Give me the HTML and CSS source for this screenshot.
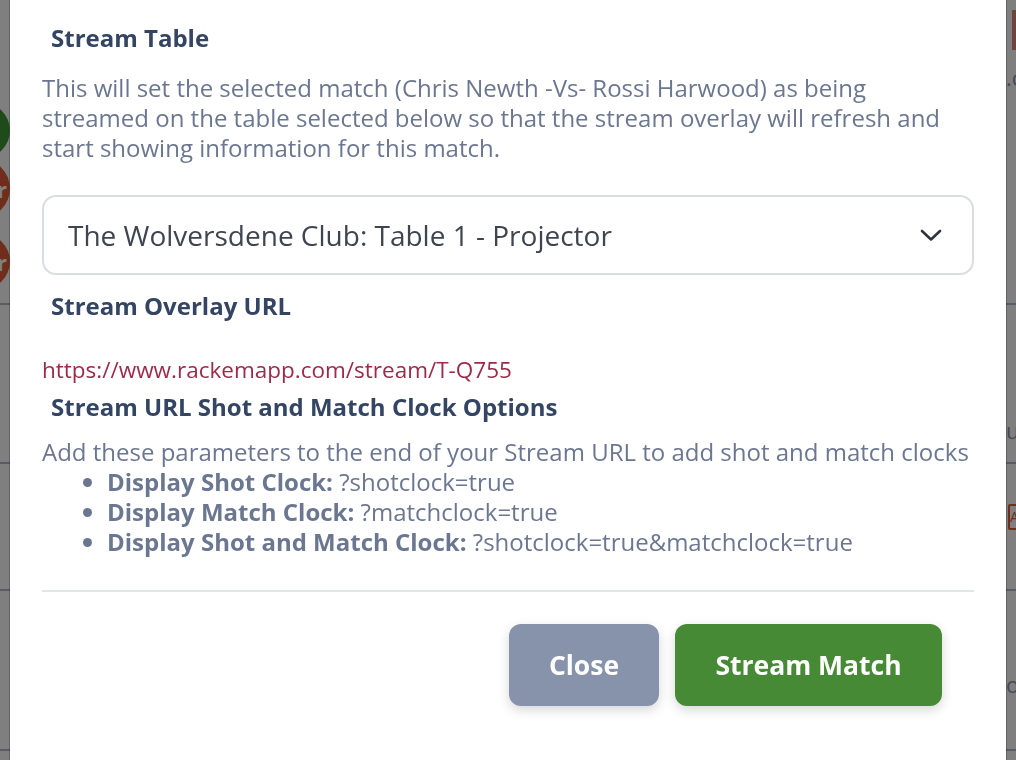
FILE: index.html
```html
<!DOCTYPE html>
<html lang="en">
<head>
<meta charset="utf-8">
<title>Stream Table</title>
<link rel="stylesheet" href="styles.css">
</head>
<body>
<div class="page">
  <div class="row r1">
    <div class="left-col">
      <span class="badge green"></span>
      <span class="badge red tall">r</span>
      <span class="badge red gapped">r</span>
    </div>
    <div class="right-col"><span class="rmark"></span><span class="rtext">.c</span></div>
  </div>
  <div class="row r2"><div class="left-col"></div><div class="right-col"><span class="rtext">u</span></div></div>
  <div class="row r3"><div class="left-col"></div><div class="right-col"><span class="warn">A</span></div></div>
  <div class="row r4"><div class="left-col"></div><div class="right-col"><span class="rtext">o</span></div></div>
</div>
<div class="backdrop"></div>
<div class="modal">
  <h2 class="title">Stream Table</h2>
  <p class="desc">This will set the selected match (Chris Newth -Vs- Rossi Harwood) as being streamed on the table selected below so that the stream overlay will refresh and start showing information for this match.</p>
  <div class="select">
    <span>The Wolversdene Club: Table 1 - Projector</span>
    <svg class="chev" width="22" height="13" viewBox="0 0 22 13"><path d="M2 2 L11 10.5 L20 2" fill="none" stroke="#2f343c" stroke-width="2.6" stroke-linecap="round" stroke-linejoin="round"/></svg>
  </div>
  <h2 class="title t2">Stream Overlay URL</h2>
  <p class="url">https://www.rackemapp.com/stream/T-Q755</p>
  <h2 class="title t3">Stream URL Shot and Match Clock Options</h2>
  <p class="desc hint">Add these parameters to the end of your Stream URL to add shot and match clocks</p>
  <ul class="opts">
    <li><b>Display Shot Clock:</b> ?shotclock=true</li>
    <li><b>Display Match Clock:</b> ?matchclock=true</li>
    <li><b>Display Shot and Match Clock:</b> ?shotclock=true&amp;matchclock=true</li>
  </ul>
  <hr class="sep">
  <div class="actions">
    <button class="btn close">Close</button>
    <button class="btn go">Stream Match</button>
  </div>
</div>
</body>
</html>
```
FILE: styles.css
```css
html, body {
  margin: 0;
  padding: 0;
  height: 760px;
  overflow: hidden;
}
body {
  font-family: "Open Sans", "Liberation Sans", sans-serif;
  background: #ffffff;
}
.page {
  display: flex;
  flex-direction: column;
  width: 1016px;
}
.row {
  display: flex;
  justify-content: space-between;
  border-bottom: 2px solid #aeb6c8;
  box-sizing: border-box;
}
.r1 { height: 305px; }
.r2 { height: 159px; }
.r3 { height: 127px; }
.r4 { height: 160px; }
.left-col {
  display: flex;
  flex-direction: column;
  margin-left: -50px;
  width: 60px;
  padding-top: 103px;
}
.badge {
  display: flex;
  align-items: center;
  justify-content: flex-end;
  height: 55px;
  width: 60px;
  border-radius: 28px;
  color: #ffffff;
  font-size: 22px;
  font-weight: 700;
  padding-right: 3px;
  box-sizing: border-box;
}
.badge.green { background: #3f9434; }
.badge.red { background: #e05a36; }
.badge.tall { height: 59px; margin-top: 1px; border-radius: 30px; }
.badge.gapped { margin-top: 16px; }
.right-col {
  width: 10px;
  display: flex;
  flex-direction: column;
  color: #8d95a8;
  font-size: 22px;
}
.rmark {
  display: block;
  width: 4px;
  height: 40px;
  margin: 10px 0 0 6px;
  background: #d98a7a;
}
.rtext { display: block; margin-top: 12px; }
.r2 .rtext { margin-top: 110px; }
.r4 .rtext { margin-top: 78px; }
.warn {
  display: block;
  margin-top: 40px;
  margin-left: 2px;
  width: 20px;
  height: 22px;
  border: 2px solid #e05a36;
  border-radius: 2px;
  color: #e05a36;
  font-size: 14px;
  line-height: 22px;
}
.backdrop {
  position: fixed;
  inset: 0;
  background: rgba(0, 0, 0, 0.5);
}
.modal {
  position: fixed;
  top: 0;
  left: 10px;
  width: 996px;
  height: 800px;
  background: #ffffff;
  box-shadow: 0 0 0 1px rgba(40, 44, 52, 0.35);
  padding: 23px 32px 0;
  box-sizing: border-box;
}
.title {
  margin: 0 0 0 9px;
  font-size: 24px;
  line-height: 30px;
  font-weight: 700;
  color: #344563;
}
.desc {
  margin: 20px 0 0;
  font-size: 24px;
  line-height: 30px;
  color: #6b7790;
}
.select {
  margin-top: 32px;
  height: 80px;
  box-sizing: border-box;
  border: 2px solid #d9dde3;
  border-radius: 14px;
  display: flex;
  align-items: center;
  justify-content: space-between;
  padding: 0 30px 0 24px;
  font-size: 28px;
  color: #3f4550;
}
.chev { display: block; }
.t2 { margin-top: 16px; }
.url {
  margin: 34px 0 0;
  font-size: 22.5px;
  line-height: 30px;
  color: #9c2a48;
}
.t3 { margin-top: 7px; }
.hint { margin-top: 15px; }
.opts {
  margin: 0;
  padding-left: 65px;
  font-size: 24px;
  line-height: 30px;
  color: #6b7790;
}
.opts b { font-weight: 700; }
.sep {
  margin: 33px 0 0;
  border: 0;
  height: 2px;
  background: #e1e4e8;
}
.actions {
  margin-top: 32px;
  display: flex;
  justify-content: flex-end;
  gap: 16px;
  padding-right: 32px;
}
.btn {
  height: 82px;
  border: 0;
  border-radius: 12px;
  font-family: "Open Sans", "Liberation Sans", sans-serif;
  font-size: 26.5px;
  font-weight: 700;
  color: #ffffff;
  box-shadow: 0 4px 12px rgba(0, 0, 0, 0.16);
}
.close { width: 150px; background: #8792ab; }
.go { width: 267px; background: #468a36; }
```
